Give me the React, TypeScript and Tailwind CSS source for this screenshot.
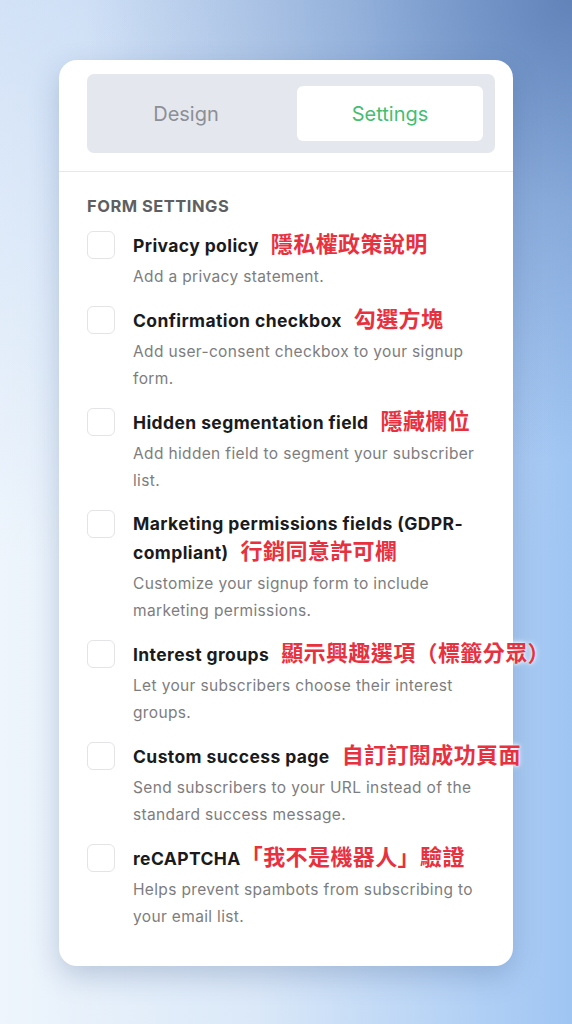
import React from 'react';

type Setting = {
  title: string[];
  note: string;
  noteGap?: boolean;
  desc: string;
};

const settings: Setting[] = [
  { title: ['Privacy policy'], note: '隱私權政策說明', noteGap: true, desc: 'Add a privacy statement.' },
  { title: ['Confirmation checkbox'], note: '勾選方塊', noteGap: true, desc: 'Add user-consent checkbox to your signup form.' },
  { title: ['Hidden segmentation field'], note: '隱藏欄位', noteGap: true, desc: 'Add hidden field to segment your subscriber list.' },
  {
    title: ['Marketing permissions fields (GDPR-', 'compliant)'],
    note: '行銷同意許可欄',
    noteGap: true,
    desc: 'Customize your signup form to include marketing permissions.',
  },
  { title: ['Interest groups'], note: '顯示興趣選項（標籤分眾）', noteGap: true, desc: 'Let your subscribers choose their interest groups.' },
  { title: ['Custom success page'], note: '自訂訂閱成功頁面', noteGap: true, desc: 'Send subscribers to your URL instead of the standard success message.' },
  { title: ['reCAPTCHA'], note: '「我不是機器人」驗證', desc: 'Helps prevent spambots from subscribing to your email list.' },
];

function SettingRow({ item }: { item: Setting }) {
  return (
    <div className="flex gap-[18px]">
      <div className="flex-none">
        <div className="h-[28px] w-[28px] rounded-[6px] border-[1.5px] border-[#e4e4e6] bg-white" />
      </div>
      <div className="min-w-0 flex-1">
        <p className="whitespace-nowrap text-[17.5px] font-bold leading-[28px] tracking-[0.4px] text-[#1b1b1d]">
          {item.title.map((line, i) => (
            <React.Fragment key={i}>
              {i > 0 && <br />}
              {line}
            </React.Fragment>
          ))}
          <span
            className={`${item.noteGap ? 'ml-3' : ''} font-['Noto_Sans_CJK_TC',sans-serif] text-[22px] font-bold leading-none tracking-[0.4px] text-[#e8313f] [text-shadow:0_0_3px_#fff,0_0_6px_#fff]`}
          >
            {item.note}
          </span>
        </p>
        <p className="mt-[3px] text-[15.5px] leading-[27px] tracking-[0.35px] text-[#7d7d80]">{item.desc}</p>
      </div>
    </div>
  );
}

export default function App() {
  return (
    <div className="flex min-h-[1024px] w-full justify-center bg-[radial-gradient(ellipse_85%_45%_at_100%_0%,#6183b9_0%,rgba(100,135,190,0.45)_45%,rgba(120,160,215,0)_100%),linear-gradient(180deg,rgba(170,198,238,0.4)_0%,rgba(170,198,238,0)_55%),linear-gradient(90deg,#eef5fc_0%,#dae8f8_45%,#9fc5f3_100%)] pt-[60px] font-['Inter','Noto_Sans_CJK_TC',sans-serif]">
      <div className="h-fit w-[454px] rounded-[18px] bg-white pb-[36px] pt-[14px] shadow-[0_10px_28px_rgba(50,80,130,0.25)]">
        <div className="pl-[28px] pr-[18px]">
          <div className="grid grid-cols-2 gap-3 rounded-[7px] bg-[#e4e7ed] p-3">
            <button className="h-[55px] pr-3 text-[20px] text-[#8c8f95]">Design</button>
            <button className="h-[55px] rounded-[6px] bg-white text-[20px] text-[#45bd72]">Settings</button>
          </div>
        </div>
        <div className="mt-[18px] h-px bg-[#e6e7ea]" />
        <div className="px-[28px] pt-[24px]">
          <h2 className="text-[16.5px] font-bold uppercase leading-[20px] tracking-[0.5px] text-[#5f5f62]">Form settings</h2>
          <div className="mt-[15px] flex flex-col gap-[16px]">
            {settings.map((s) => (
              <SettingRow key={s.title[0]} item={s} />
            ))}
          </div>
        </div>
      </div>
    </div>
  );
}
